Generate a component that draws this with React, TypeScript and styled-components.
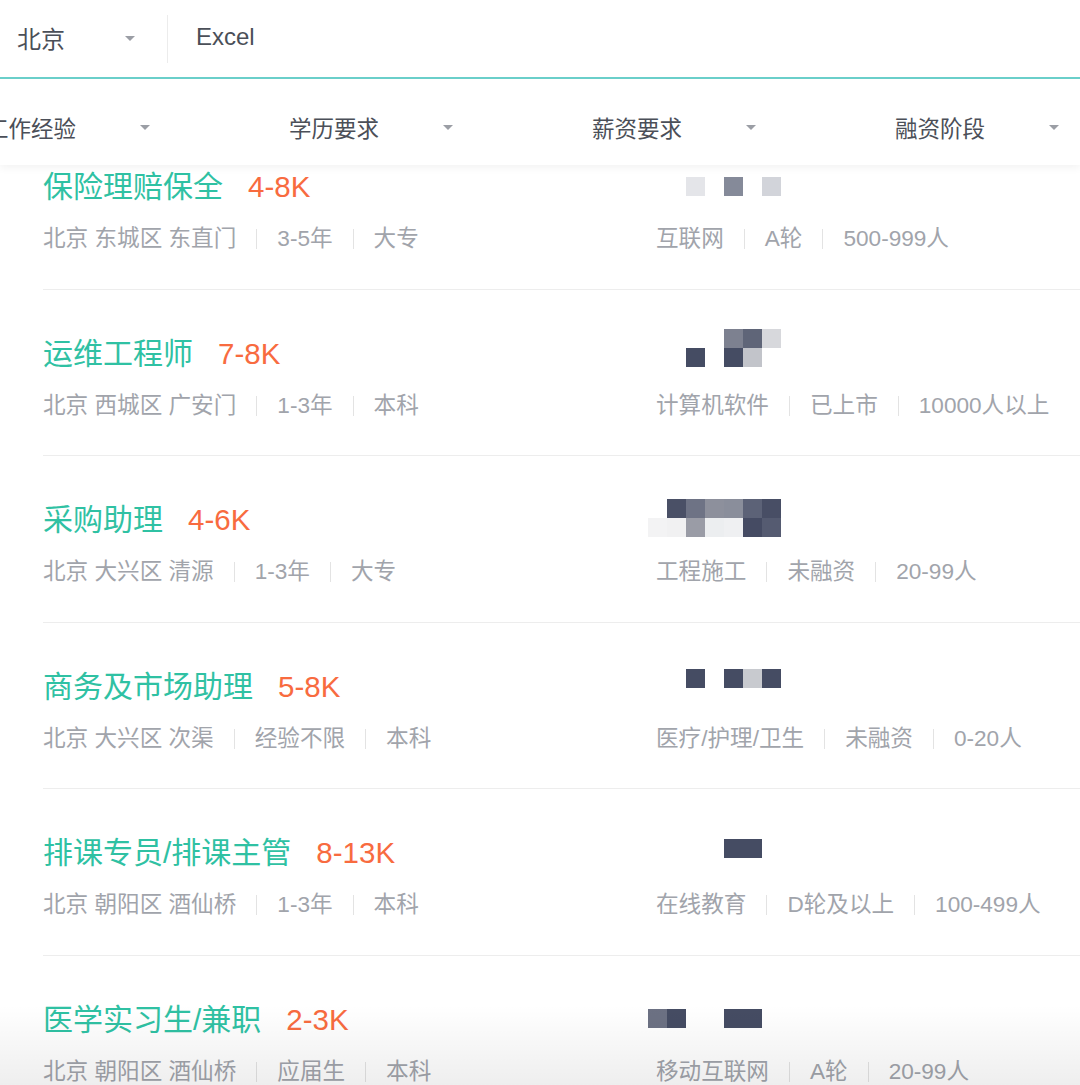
import React from "react";
import styled, { createGlobalStyle } from "styled-components";

const GlobalStyle = createGlobalStyle`
  html, body {
    margin: 0;
    padding: 0;
    background: #ffffff;
    overflow: hidden;
  }
  body {
    font-family: "Liberation Sans", "Noto Sans CJK SC", sans-serif;
  }
  * { box-sizing: border-box; }
`;

const Page = styled.div`
  width: 1080px;
  height: 1085px;
  position: relative;
  overflow: hidden;
  background: #fff;
`;

const Header = styled.header`
  position: absolute;
  top: 0;
  left: 0;
  right: 0;
  z-index: 5;
  background: #fff;
  box-shadow: 0 3px 8px rgba(0, 0, 0, 0.05);
`;

const TopBar = styled.div`
  height: 79px;
  display: flex;
  align-items: center;
  border-bottom: 2px solid #6acfca;
  padding-left: 17px;
`;

const CityPicker = styled.div`
  width: 150px;
  display: flex;
  align-items: center;
  font-size: 24px;
  color: #4b4f58;
`;

const CityLabel = styled.span`
  width: 108px;
  padding-bottom: 3px;
`;

const Caret = styled.span`
  width: 0;
  height: 0;
  border-left: 5px solid transparent;
  border-right: 5px solid transparent;
  border-top: 5px solid #9b9ea5;
`;

const VDivider = styled.span`
  width: 1px;
  height: 48px;
  background: #ececec;
`;

const SearchText = styled.span`
  margin-left: 28px;
  font-size: 24px;
  color: #4b4f58;
  padding-bottom: 3px;
`;

const FilterBar = styled.div`
  height: 86px;
  display: flex;
  align-items: center;
  padding-top: 10px;
  margin-left: -14px;
`;

const FilterCell = styled.div`
  width: 303px;
  flex: none;
  display: flex;
  align-items: center;
  font-size: 22.5px;
  color: #4b4f58;
`;

const FilterLabel = styled.span`
  width: 154px;
`;

const List = styled.main`
  padding-top: 123px;
`;

const Item = styled.div`
  margin-left: 43px;
  height: 166.5px;
  padding-top: 44px;
  border-bottom: 1px solid #ededed;
  display: grid;
  grid-template-columns: 605px 1fr;
  grid-template-rows: 40px 30px;
  row-gap: 17px;
`;

const TitleLine = styled.div`
  display: flex;
  align-items: center;
  white-space: nowrap;
  line-height: 40px;
`;

const Title = styled.span`
  font-size: 30px;
  color: #2fc1a3;
`;

const Salary = styled.span`
  font-size: 29.5px;
  color: #f86b3f;
  margin-left: 25px;
`;

const LogoLine = styled.div`
  height: 40px;
  display: flex;
  align-items: center;
`;

const Meta = styled.div<{ $indent?: boolean }>`
  display: flex;
  align-items: center;
  white-space: nowrap;
  font-size: 22.6px;
  line-height: 30px;
  color: #a1a4ab;
  padding-left: ${(p) => (p.$indent ? "8px" : "0")};
`;

const Sep = styled.span`
  width: 1px;
  height: 20px;
  background: #e3e3e3;
  margin: 0 20px;
`;

const BottomFade = styled.div`
  position: absolute;
  left: 0;
  right: 0;
  bottom: 0;
  height: 80px;
  pointer-events: none;
  background: linear-gradient(rgba(0, 0, 0, 0), rgba(0, 0, 0, 0.065));
  z-index: 4;
`;

type Cell = [number, number, string];

const D = "#454c63";

const jobs: {
  title: string;
  salary: string;
  loc: string[];
  co: string[];
  cells: Cell[];
}[] = [
  {
    title: "保险理赔保全",
    salary: "4-8K",
    loc: ["北京 东城区 东直门", "3-5年", "大专"],
    co: ["互联网", "A轮", "500-999人"],
    cells: [
      [2, -10, "#e4e5e9"],
      [4, -10, "#858a99"],
      [6, -10, "#d2d4da"],
    ],
  },
  {
    title: "运维工程师",
    salary: "7-8K",
    loc: ["北京 西城区 广安门", "1-3年", "本科"],
    co: ["计算机软件", "已上市", "10000人以上"],
    cells: [
      [4, -25, "#7d8190"],
      [5, -25, "#5f6578"],
      [6, -25, "#d7d8dc"],
      [2, -6, D],
      [4, -6, D],
      [5, -6, "#c2c4ca"],
    ],
  },
  {
    title: "采购助理",
    salary: "4-6K",
    loc: ["北京 大兴区 清源", "1-3年", "大专"],
    co: ["工程施工", "未融资", "20-99人"],
    cells: [
      [1, -21, "#4a5066"],
      [2, -21, "#6e7385"],
      [3, -21, "#8d909c"],
      [4, -21, "#8a8e9b"],
      [5, -21, "#5c6277"],
      [6, -21, "#484e65"],
      [0, -2, "#f3f3f4"],
      [1, -2, "#f1f1f2"],
      [2, -2, "#9a9ca6"],
      [3, -2, "#eceef0"],
      [4, -2, "#eff0f2"],
      [5, -2, "#454b63"],
      [6, -2, "#555b71"],
    ],
  },
  {
    title: "商务及市场助理",
    salary: "5-8K",
    loc: ["北京 大兴区 次渠", "经验不限", "本科"],
    co: ["医疗/护理/卫生", "未融资", "0-20人"],
    cells: [
      [2, -18, D],
      [4, -18, D],
      [5, -18, "#c8cacf"],
      [6, -18, D],
    ],
  },
  {
    title: "排课专员/排课主管",
    salary: "8-13K",
    loc: ["北京 朝阳区 酒仙桥", "1-3年", "本科"],
    co: ["在线教育", "D轮及以上", "100-499人"],
    cells: [
      [4, -14, D],
      [5, -14, D],
    ],
  },
  {
    title: "医学实习生/兼职",
    salary: "2-3K",
    loc: ["北京 朝阳区 酒仙桥", "应届生", "本科"],
    co: ["移动互联网", "A轮", "20-99人"],
    cells: [
      [0, -11, "#6c7183"],
      [1, -11, D],
      [4, -11, D],
      [5, -11, D],
    ],
  },
];

const Mosaic: React.FC<{ cells: Cell[] }> = ({ cells }) => (
  <svg
    width="140"
    height="40"
    viewBox="0 -20 140 40"
    style={{ overflow: "visible" }}
  >
    {cells.map(([c, y, color], i) => (
      <rect key={i} x={c * 19} y={y} width="19" height="19" fill={color} />
    ))}
  </svg>
);

const MetaRow: React.FC<{ parts: string[]; indent?: boolean }> = ({
  parts,
  indent,
}) => (
  <Meta $indent={indent}>
    {parts.map((p, i) => (
      <React.Fragment key={i}>
        {i > 0 && <Sep />}
        <span>{p}</span>
      </React.Fragment>
    ))}
  </Meta>
);

const filters = ["工作经验", "学历要求", "薪资要求", "融资阶段"];

export default function App() {
  return (
    <Page>
      <GlobalStyle />
      <Header>
        <TopBar>
          <CityPicker>
            <CityLabel>北京</CityLabel>
            <Caret />
          </CityPicker>
          <VDivider />
          <SearchText>Excel</SearchText>
        </TopBar>
        <FilterBar>
          {filters.map((f) => (
            <FilterCell key={f}>
              <FilterLabel>{f}</FilterLabel>
              <Caret />
            </FilterCell>
          ))}
        </FilterBar>
      </Header>
      <List>
        {jobs.map((j) => (
          <Item key={j.title}>
            <TitleLine>
              <Title>{j.title}</Title>
              <Salary>{j.salary}</Salary>
            </TitleLine>
            <LogoLine>
              <Mosaic cells={j.cells} />
            </LogoLine>
            <MetaRow parts={j.loc} />
            <MetaRow parts={j.co} indent />
          </Item>
        ))}
      </List>
      <BottomFade />
    </Page>
  );
}
